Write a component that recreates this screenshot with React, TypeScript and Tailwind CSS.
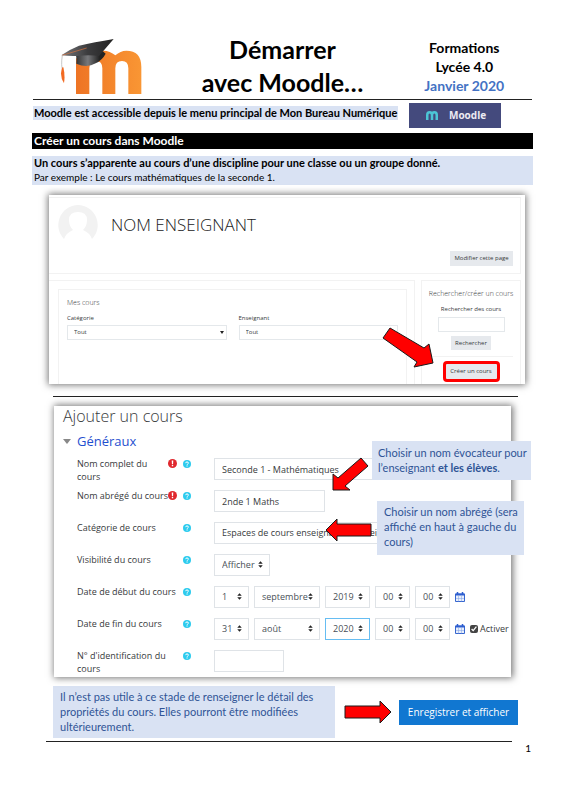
import type { ReactNode } from "react";
import { clsx } from "clsx";

const tout = ["Tout"];

function MoodleLogo() {
  return (
    <svg viewBox="120 39 249 171" className="h-[57px] w-[83px]" role="img" aria-label="Moodle">
      <defs>
        <linearGradient id="orange" x1="0" x2="1">
          <stop offset="0" stopColor="#ee7424" />
          <stop offset="1" stopColor="#f99634" />
        </linearGradient>
        <linearGradient id="board" x1="0" x2="1">
          <stop offset="0" stopColor="#77787b" />
          <stop offset="0.5" stopColor="#3c3c3e" />
          <stop offset="1" stopColor="#222" />
        </linearGradient>
        <linearGradient id="cap" x1="0" x2="1">
          <stop offset="0" stopColor="#333" />
          <stop offset="0.4" stopColor="#77787b" />
          <stop offset="0.8" stopColor="#222" />
        </linearGradient>
      </defs>
      <path
        d="M168 207V100H208Q222 77 250 77Q270 77 286 91Q301 77 319 77Q364 77 364 126V207H325V130Q325 108 306 108Q286 108 286 130V207H247V130Q247 108 228 108Q208 108 208 130V207Z"
        fill="url(#orange)"
      />
      <path d="M168 91Q171 104 169 116Q201 130 227 115Q247 105 257 86Q249 76 240 78Z" fill="url(#cap)" />
      <path d="M124 91Q151 72 177 62Q222 52 281 42L237 93Q208 89 172 93Q148 94 124 91Z" fill="url(#board)" />
      <path d="M126 91L200 69" stroke="#dc7440" strokeWidth="2" fill="none" />
      <path d="M127 91Q122 122 129 140" stroke="#aaa" strokeWidth="2" fill="none" />
      <path d="M127 127Q117 151 132 175Q136 151 130 127Z" fill="#f26a22" />
    </svg>
  );
}

function Carets({ className }: { className?: string }) {
  return (
    <svg viewBox="0 0 6 8" className={clsx("pointer-events-none absolute h-[7px] w-[5px]", className)}>
      <path d="M3 0L5.700 3.200H.3ZM3 8L5.700 4.800H.3Z" fill="#222" />
    </svg>
  );
}

function Help() {
  return (
    <button type="button" aria-label="Aide" className="mt-[3px] flex h-2 w-2">
      <svg viewBox="0 0 16 16" className="h-2 w-2">
        <circle cx="8" cy="8" r="8" fill="#2ccbee" />
        <path d="M5.200 6.300Q5.400 3.900 8 3.900Q10.800 3.900 10.800 6.100Q10.800 7.200 9.500 8Q8.200 8.700 8.200 9.800" stroke="#fff" strokeWidth="2" fill="none" />
        <path d="M7 11h2.300v2.200H7z" fill="#fff" />
      </svg>
    </button>
  );
}

function Required() {
  return (
    <svg viewBox="0 0 16 16" className="mt-[2px] h-[9px] w-[9px]" role="img" aria-label="Requis">
      <circle cx="8" cy="8" r="8" fill="#e0282e" />
      <path d="M6.600 2.500h2.800L9 9.500H7zM6.800 10.700h2.400V13H6.800z" fill="#fff" />
    </svg>
  );
}

function Calendar() {
  return (
    <button type="button" aria-label="Calendrier" className="flex h-[10px] w-[10px]">
      <svg viewBox="0 0 20 20" className="h-[10px] w-[10px]">
        <path d="M1 4h18v15H1z" fill="#e8effb" stroke="#3766cf" strokeWidth="2" />
        <path d="M1 3h18v4H1z" fill="#2f5fd0" />
        <path d="M5 0v5M15 0v5" stroke="#2f5fd0" strokeWidth="3" />
        <path d="M2 13h16M7 8v11M13 8v11" stroke="#7f9fe5" strokeWidth="1" />
      </svg>
    </button>
  );
}

function Arrow({ points, viewBox, className }: { points: string; viewBox: string; className: string }) {
  return (
    <svg viewBox={viewBox} className={className} aria-hidden="true">
      <polygon points={points} fill="#f00" stroke="#1a1a1a" strokeWidth="1" />
    </svg>
  );
}

function Pick({
  id,
  label,
  value,
  className,
  active,
}: {
  id?: string;
  label?: string;
  value: string;
  className: string;
  active?: boolean;
}) {
  return (
    <div className={clsx("relative h-[22px]", className)}>
      <select
        id={id}
        aria-label={label}
        defaultValue={value}
        className={clsx(
          "h-full w-full appearance-none border bg-white pl-[7px] text-[#495057]",
          active ? "border-[#66bdf2]" : "border-[#dfe3e7]",
        )}
      >
        <option>{value}</option>
      </select>
      <Carets className="top-[7px] right-[7px]" />
    </div>
  );
}

function Row({
  id,
  label,
  required,
  children,
}: {
  id: string;
  label: string;
  required?: boolean;
  children: ReactNode;
}) {
  return (
    <div className="flex h-8">
      <label htmlFor={id} className={clsx("shrink-0 leading-[13px]", required ? "w-[91px]" : "w-[106px]")}>
        {label}
      </label>
      {required && (
        <span className="w-[15px] shrink-0">
          <Required />
        </span>
      )}
      <span className="w-[31px] shrink-0">
        <Help />
      </span>
      <div className="flex min-w-0 flex-1 items-start pt-px">{children}</div>
    </div>
  );
}

function DateFields({
  id,
  day,
  month,
  year,
  active,
}: {
  id: string;
  day: string;
  month: string;
  year: string;
  active?: boolean;
}) {
  return (
    <div className="flex h-[22px] items-center gap-[5px]">
      <Pick id={id} value={day} className="w-[35px]" />
      <Pick label="Mois" value={month} className="w-[66px]" />
      <Pick label="Année" value={year} className="w-[45px]" active={active} />
      <Pick label="Heure" value="00" className="w-[35px]" />
      <Pick label="Minute" value="00" className="w-[35px]" />
      <Calendar />
    </div>
  );
}

function Filter({ id, label }: { id: string; label: string }) {
  return (
    <div className="min-w-0 flex-1">
      <label htmlFor={id} className="block leading-[10px]">
        {label}
      </label>
      <div className="relative mt-[2px]">
        <select id={id} className="h-[15px] w-full appearance-none border border-[#e4e8eb] bg-white pl-[6px]">
          {tout.map((t) => (
            <option key={t}>{t}</option>
          ))}
        </select>
        <svg viewBox="0 0 4 3" className="pointer-events-none absolute top-[6px] right-[3px] h-[3px] w-1">
          <path d="M0 0h4L2 3z" fill="#222" />
        </svg>
      </div>
    </div>
  );
}

function Header() {
  return (
    <header className="mx-[33px] grid grid-cols-[1fr_190px_1fr] border-b border-[#222] pt-[33px] font-bold">
      <div className="pt-[5px] pl-[27px]">
        <MoodleLogo />
      </div>
      <h1 className="text-center text-[25px] leading-[33px]">
        Démarrer
        <br />
        avec Moodle…
      </h1>
      <div className="pt-[5px] pl-[19px] text-center text-[14px] leading-[19px]">
        <p>Formations</p>
        <p>Lycée 4.0</p>
        <p className="text-[#4472c4]">Janvier 2020</p>
      </div>
    </header>
  );
}

function TeacherPanel() {
  return (
    <section className="relative mr-[40px] ml-[49px] h-[189px] bg-white pt-[2px] pr-1 font-['Open_Sans','Noto_Sans',sans-serif] text-[6px] text-[#373a3c] shadow-[0_0_7px_1px_#777]">
      <div className="flex h-[77px] border border-l-0 border-[#f2f2f2]">
        <svg viewBox="0 0 40 36" className="mt-[7px] ml-[9px] h-9 w-10" aria-hidden="true">
          <path d="M20 0a20 20 0 0 1 14 34Q32 28 25 25Q29 21 29 15Q29 7 20 7Q11 7 11 15Q11 21 15 25Q8 28 6 34A20 20 0 0 1 20 0Z" fill="#f2f2f2" />
        </svg>
        <h2 className="mt-[15px] ml-[13px] flex-1 text-[17px] leading-[24px] font-light text-[#222]">NOM ENSEIGNANT</h2>
        <button type="button" className="mt-auto mr-[7px] mb-[7px] h-[15px] w-[63px] bg-[#e6e9ed] text-center whitespace-nowrap">
          Modifier cette page
        </button>
      </div>
      <div className="mt-[6px] flex h-[104px] gap-[6px]">
        <div className="flex-1 border border-b-0 border-l-0 border-[#f2f2f2] pt-[8px] pr-[7px] pl-[9px]">
          <div className="h-full border border-b-0 border-[#f2f2f2] px-[8px] pt-[7px]">
            <h3 className="text-[7px] leading-[12px] font-light">Mes cours</h3>
            <div className="mt-[4px] flex gap-[12px]">
              <Filter id="categorie" label="Catégorie" />
              <Filter id="enseignant" label="Enseignant" />
            </div>
          </div>
        </div>
        <div className="flex w-[100px] flex-col items-center border border-b-0 border-[#f2f2f2] pt-[7px]">
          <h3 className="text-[7px] leading-[12px] font-light whitespace-nowrap">Rechercher/créer un cours</h3>
          <label htmlFor="recherche" className="mt-[4px] leading-[10px]">
            Rechercher des cours
          </label>
          <input id="recherche" className="mt-[3px] h-[15px] w-[67px] border border-[#e4e8eb]" />
          <button type="button" className="mt-[4px] h-[14px] w-[40px] bg-[#e6e9ed]">
            Rechercher
          </button>
          <hr className="mt-[6px] w-[83px] border-[#f2f2f2]" />
          <button type="button" className="mt-[4px] h-[21px] w-[57px] shrink-0 rounded-[4px] border-3 border-[#f00] bg-[#e6e9ed]">
            Créer un cours
          </button>
        </div>
      </div>
      <Arrow
        className="absolute top-[131px] right-[91px] h-[42px] w-[52px]"
        viewBox="382 326 52 42"
        points="390,328 424,348 429,344 433,363 414,367 417,362 383,338"
      />
    </section>
  );
}

function CourseForm() {
  return (
    <form
      className="relative mr-[54px] ml-[54px] h-[271px] bg-white pl-[9px] font-['Open_Sans','Noto_Sans',sans-serif] text-[9px] text-[#373a3c] shadow-[1px_0_7px_1px_#777]"
      onSubmit={(e) => e.preventDefault()}
    >
      <h2 className="text-[16px] leading-[20px] font-light">Ajouter un cours</h2>
      <h3 className="mt-[6px] flex items-center text-[13px] leading-[18px] text-[#1f4fcf]">
        <svg viewBox="0 0 8 5" className="mr-[6px] h-[5px] w-2" aria-hidden="true">
          <path d="M0 0h8L4 5z" fill="#888" />
        </svg>
        Généraux
      </h3>
      <div className="mt-[7px] pl-[14px]">
        <Row id="complet" label="Nom complet du cours" required>
          <input id="complet" defaultValue="Seconde 1 - Mathématiques" className="h-[22px] w-[200px] border border-[#dfe3e7] pl-[7px]" />
        </Row>
        <Row id="abrege" label="Nom abrégé du cours" required>
          <input id="abrege" defaultValue="2nde 1 Maths" className="h-[22px] w-[111px] border border-[#dfe3e7] pl-[7px]" />
        </Row>
        <Row id="cat" label="Catégorie de cours">
          <select id="cat" className="h-[22px] w-[200px] appearance-none border border-[#dfe3e7] pl-[7px]">
            <option>Espaces de cours enseignants / Enseignant</option>
          </select>
        </Row>
        <Row id="visible" label="Visibilité du cours">
          <Pick id="visible" value="Afficher" className="w-[56px]" />
        </Row>
        <Row id="debut" label="Date de début du cours">
          <DateFields id="debut" day="1" month="septembre" year="2019" />
        </Row>
        <Row id="fin" label="Date de fin du cours">
          <DateFields id="fin" day="31" month="août" year="2020" active />
          <label className="mt-[4px] ml-[5px] flex items-center gap-[2px] leading-[14px]">
            <input type="checkbox" defaultChecked className="h-2 w-2 accent-[#444]" />
            Activer
          </label>
        </Row>
        <Row id="numero" label="N° d'identification du cours">
          <input id="numero" className="h-[22px] w-[70px] border border-[#dfe3e7]" />
        </Row>
      </div>
      <Arrow
        className="absolute top-[51px] left-[278px] h-[35px] w-[38px]"
        viewBox="332 457 38 35"
        points="333,490 333,474 338,478 361,458 368,466 345,486 350,490"
      />
      <Arrow
        className="absolute top-[112px] left-[271px] h-[24px] w-[47px]"
        viewBox="325 518 47 24"
        points="326,530 337,519 337,524 371,524 371,536 337,536 337,541"
      />
      <p className="absolute top-[35px] right-[-20px] h-[39px] w-[159px] bg-[#d9e2f3] pt-[4px] pl-[6px] font-['Lato','Carlito',sans-serif] text-[11px] leading-[15px] text-[#2f5496]">
        Choisir un nom évocateur pour l’enseignant <b>et les élèves</b>.
      </p>
      <p className="absolute top-[95px] right-[-13px] h-[54px] w-[147px] bg-[#d9e2f3] pt-[3px] pl-[7px] font-['Lato','Carlito',sans-serif] text-[11px] leading-[15px] text-[#2f5496]">
        Choisir un nom abrégé (sera affiché en haut à gauche du cours)
      </p>
    </form>
  );
}

export default function App() {
  return (
    <main className="min-h-screen bg-white font-['Lato','Carlito',sans-serif] text-black">
      <Header />
      <div className="mr-[64px] ml-[33px] flex items-start justify-between pt-[3px]">
        <p className="mt-[3px] bg-[#d9e2f3] px-px text-[11px] leading-[14px] font-bold whitespace-nowrap">
          Moodle est accessible depuis le menu principal de Mon Bureau Numérique
        </p>
        <button type="button" className="flex h-[25px] w-[92px] shrink-0 items-center gap-[11px] bg-[#444a7d] pl-[17px] font-['Open_Sans',sans-serif] text-[10px] font-bold text-[#eceaf2]">
          <svg viewBox="0 0 24 18" className="h-[9px] w-3" aria-hidden="true">
            <path d="M2.500 18V8Q2.500 2.500 7.200 2.500Q12 2.500 12 8V18M12 8Q12 2.500 16.800 2.500Q21.500 2.500 21.500 8V18" fill="none" stroke="#4cc5d5" strokeWidth="5" />
          </svg>
          Moodle
        </button>
      </div>
      <h2 className="mx-[32px] mt-[5px] bg-black pl-[2px] text-[12px] leading-[16px] font-bold text-white">Créer un cours dans Moodle</h2>
      <div className="mx-[32px] mt-[7px] mb-[10px] h-[29px] bg-[#d9e2f3] pl-[2px] leading-[14px]">
        <p className="text-[11px] font-bold">Un cours s’apparente au cours d’une discipline pour une classe ou un groupe donné.</p>
        <p className="text-[10px]">Par exemple : Le cours mathématiques de la seconde 1.</p>
      </div>
      <TeacherPanel />
      <hr className="mt-[12px] mr-[47px] mb-[9px] ml-[53px] border-[#222]" />
      <CourseForm />
      <div className="mr-[47px] ml-[53px] flex items-center pt-[9px]">
        <p className="h-[52px] w-[282px] bg-[#d9e2f3] px-[7px] pt-[3px] text-[11px] leading-[15px] text-[#2f5496]">
          Il n’est pas utile à ce stade de renseigner le détail des propriétés du cours. Elles pourront être modifiées ultérieurement.
        </p>
        <Arrow className="ml-[9px] h-[24px] w-[48px]" viewBox="344 698 48 24" points="345,704 380,704 380,699 391,710 380,721 380,716 345,716" />
        <button type="button" className="ml-auto h-[25px] w-[119px] bg-[#1177d1] font-['Open_Sans',sans-serif] text-[10px] whitespace-nowrap text-white">
          Enregistrer et afficher
        </button>
      </div>
      <hr className="mt-[3px] mr-[53px] ml-[46px] border-[#222]" />
      <footer className="pr-[34px] text-right text-[10px] leading-[12px]">1</footer>
    </main>
  );
}
